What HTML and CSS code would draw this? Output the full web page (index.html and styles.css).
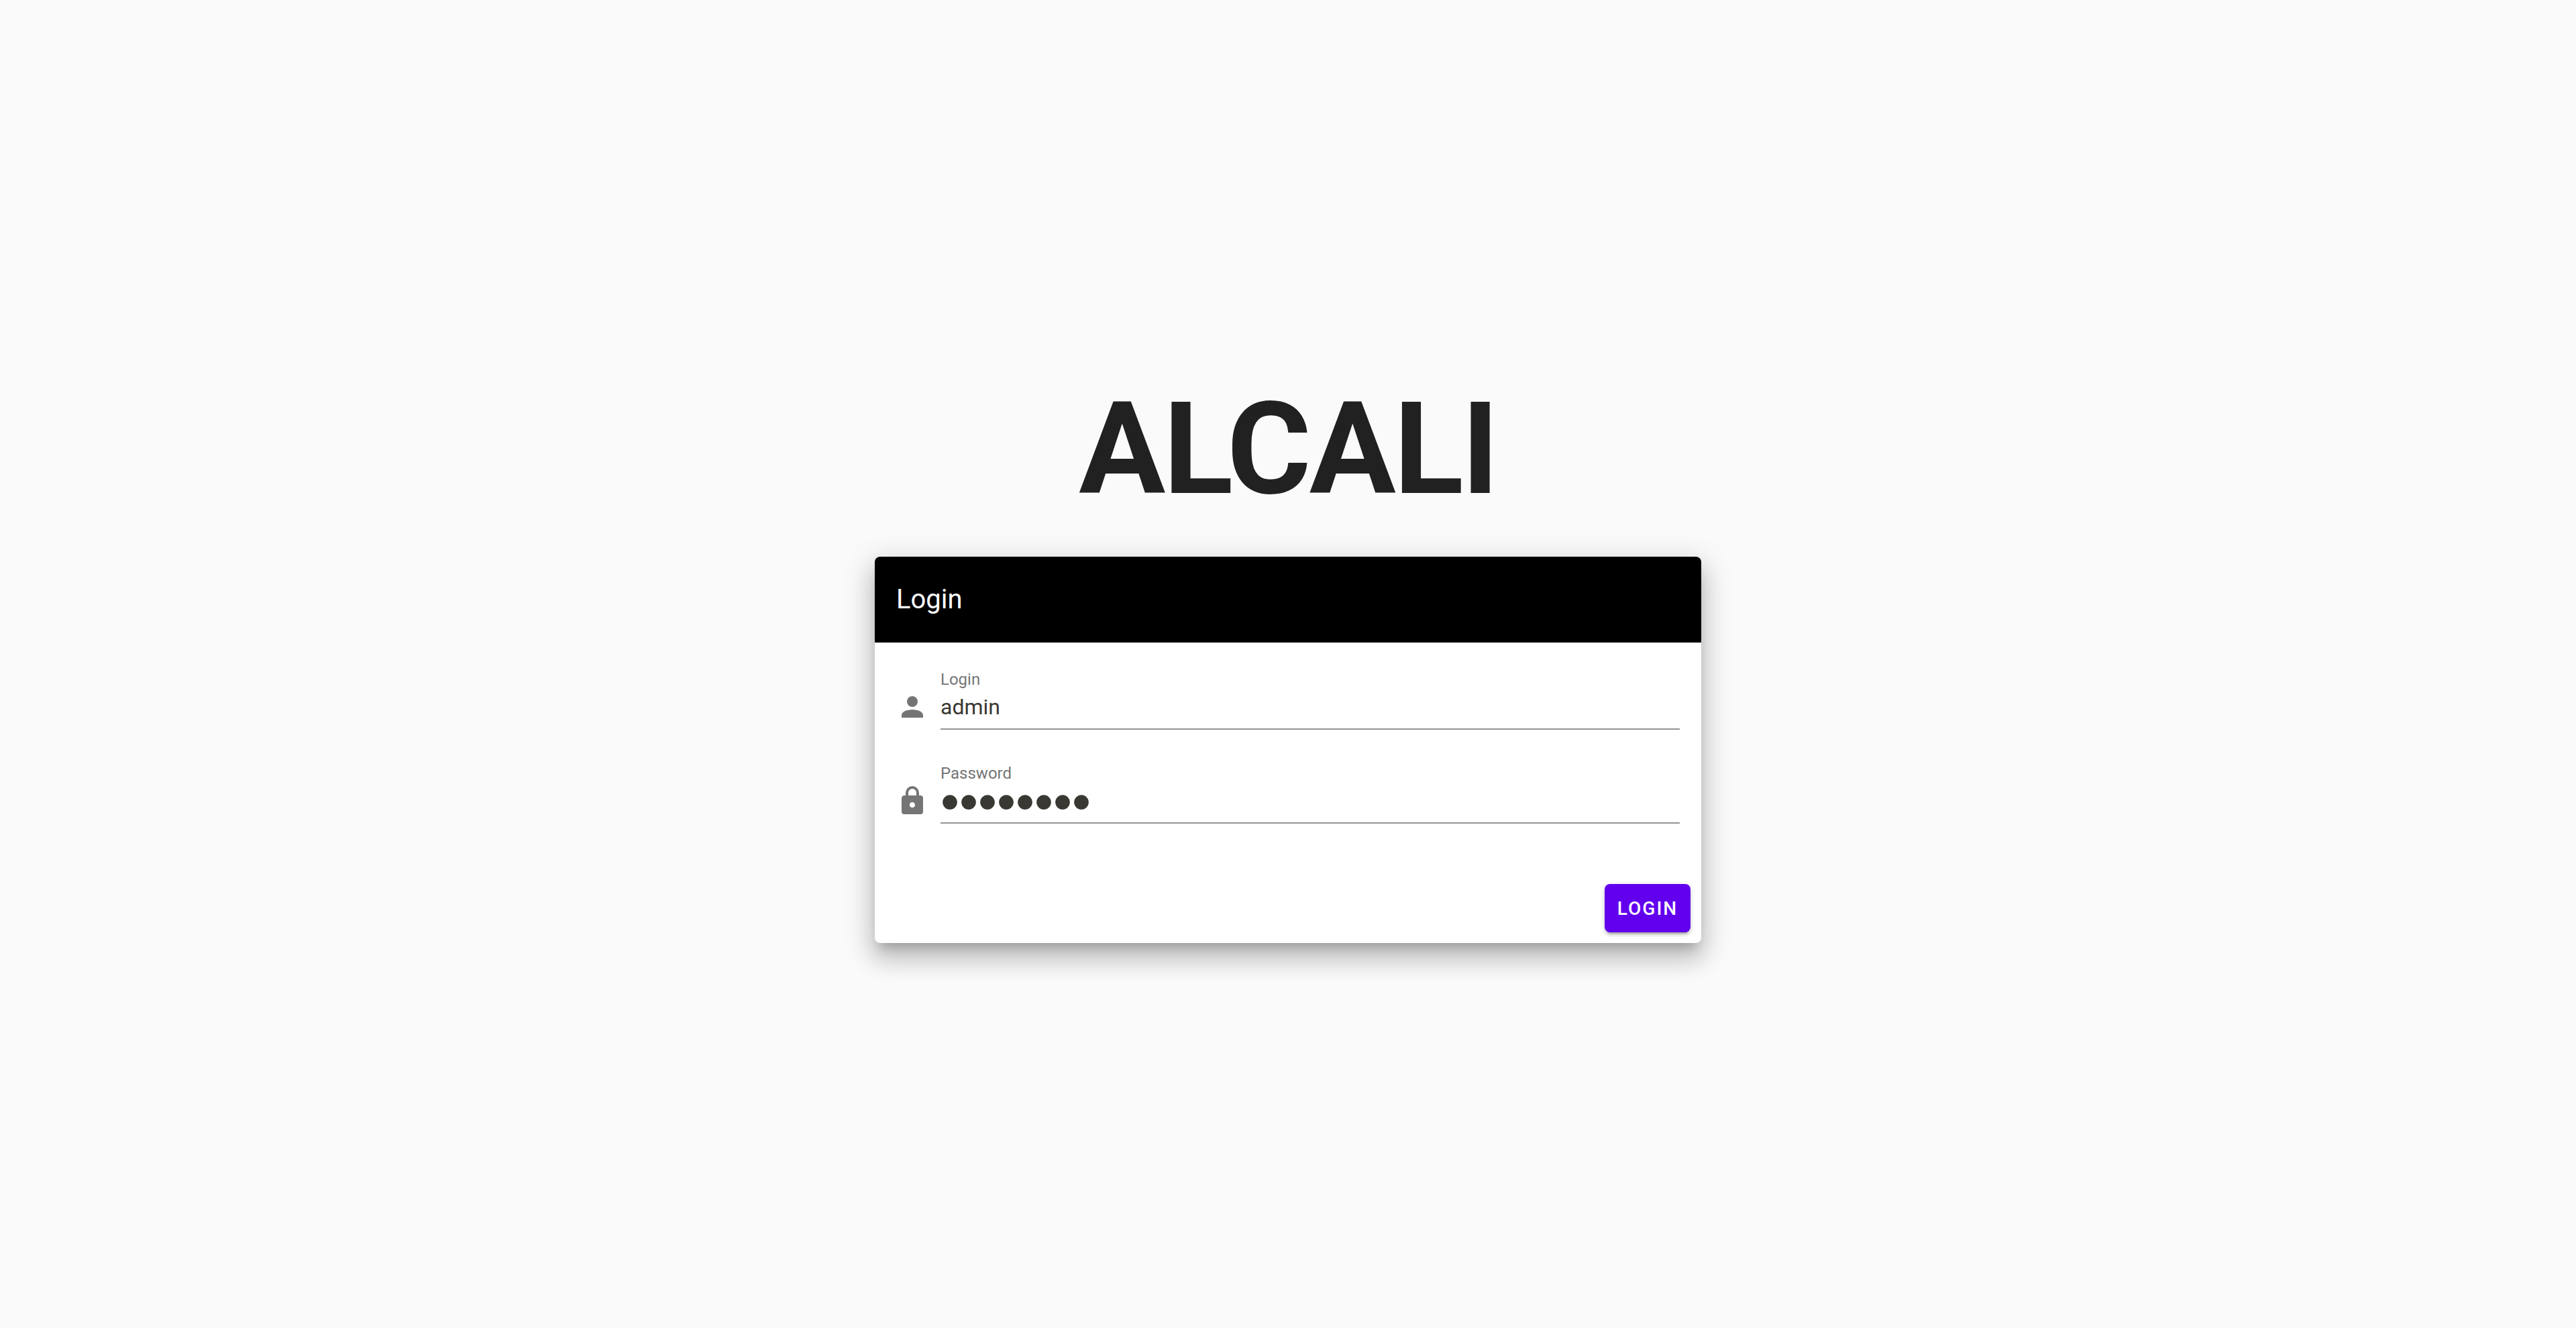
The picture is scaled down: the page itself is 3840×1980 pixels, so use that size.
FILE: index.html
```html
<!DOCTYPE html>
<html lang="en">
<head>
  <meta charset="utf-8">
  <title>Alcali</title>
  <link rel="stylesheet" href="styles.css">
</head>
<body>
  <main class="page">
    <div class="column">
      <h1 class="brand">ALCALI</h1>
      <form class="card">
        <header class="card-header">
          <h2 class="card-title">Login</h2>
        </header>
        <div class="card-body">
          <div class="row">
            <svg class="icon" viewBox="0 0 24 24" aria-hidden="true"><path d="M12,4A4,4 0 0,1 16,8A4,4 0 0,1 12,12A4,4 0 0,1 8,8A4,4 0 0,1 12,4M12,14C16.42,14 20,15.79 20,18V20H4V18C4,15.79 7.58,14 12,14Z"/></svg>
            <div class="field">
              <label class="label" for="login">Login</label>
              <input class="input" id="login" type="text" value="admin">
            </div>
          </div>
          <div class="row">
            <svg class="icon" viewBox="0 0 24 24" aria-hidden="true"><path d="M12,17A2,2 0 0,0 14,15C14,13.89 13.1,13 12,13A2,2 0 0,0 10,15A2,2 0 0,0 12,17M18,8A2,2 0 0,1 20,10V20A2,2 0 0,1 18,22H6A2,2 0 0,1 4,20V10C4,8.89 4.9,8 6,8H7V6A5,5 0 0,1 12,1A5,5 0 0,1 17,6V8H18M12,3A3,3 0 0,0 9,6V8H15V6A3,3 0 0,0 12,3Z"/></svg>
            <div class="field">
              <label class="label" for="password">Password</label>
              <input class="input input-password" id="password" type="password" value="password">
            </div>
          </div>
        </div>
        <footer class="card-actions">
          <button class="button" type="submit">LOGIN</button>
        </footer>
      </form>
    </div>
  </main>
</body>
</html>
```
FILE: styles.css
```css
* {
  box-sizing: border-box;
}

body {
  margin: 0;
  background: #fafafa;
  color: #212121;
  font-family: Roboto, sans-serif;
}

.page {
  display: flex;
  align-items: center;
  justify-content: center;
  min-height: 100vh;
}

.column {
  width: calc(100% / 3);
  min-width: 640px;
  padding: 0 24px;
}

.brand {
  margin: 0 0 64px;
  font-size: 192px;
  font-weight: 700;
  line-height: 192px;
  letter-spacing: -3px;
  text-align: center;
}

.card {
  overflow: hidden;
  border-radius: 8px;
  background: #fff;
  box-shadow:
    0 14px 16px -8px rgba(0, 0, 0, 0.2),
    0 24px 34px 4px rgba(0, 0, 0, 0.14),
    0 10px 44px 8px rgba(0, 0, 0, 0.12);
}

.card-header {
  display: flex;
  align-items: center;
  height: 128px;
  padding: 0 32px;
  background: #000;
  color: #fff;
}

.card-title {
  margin: 0;
  font-size: 40px;
  font-weight: 400;
  line-height: 60px;
}

.card-body {
  display: flex;
  flex-direction: column;
  gap: 52px;
  padding: 42px 32px 74px;
}

.row {
  display: flex;
  align-items: flex-end;
  gap: 18px;
}

.icon {
  flex: none;
  width: 48px;
  height: 48px;
  margin-bottom: 10px;
  fill: #757575;
}

.field {
  display: flex;
  flex: 1;
  flex-direction: column;
}

.label {
  color: #757575;
  font-size: 24px;
  line-height: 26px;
}

.input {
  width: 100%;
  height: 62px;
  padding: 0 0 4px;
  border: 0;
  border-bottom: 2px solid #949494;
  outline: 0;
  background: transparent;
  color: #393832;
  font-family: inherit;
  font-size: 32px;
}

/* Large masking dots */
.input-password {
  padding: 0;
  font-family: "Liberation Sans", Arial, sans-serif;
  font-size: 80px;
}

.card-actions {
  display: flex;
  justify-content: flex-end;
  padding: 16px;
}

.button {
  min-width: 128px;
  height: 72px;
  padding: 0 16px;
  border: 0;
  border-radius: 8px;
  background: #6200ee;
  box-shadow:
    0 6px 2px -4px rgba(0, 0, 0, 0.2),
    0 4px 4px 0 rgba(0, 0, 0, 0.14),
    0 2px 10px 0 rgba(0, 0, 0, 0.12);
  color: #fff;
  font-family: inherit;
  font-size: 28px;
  font-weight: 500;
  letter-spacing: 2px;
}
```
